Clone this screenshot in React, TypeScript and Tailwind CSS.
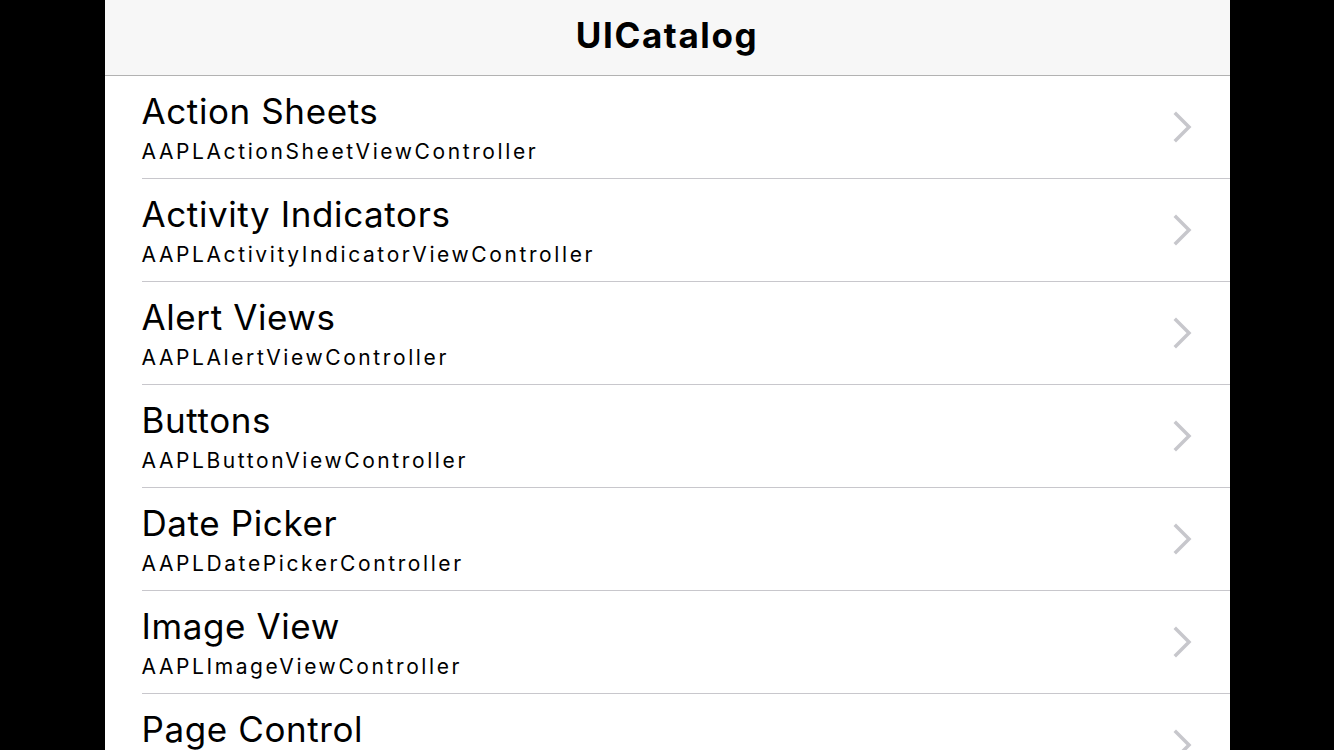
const items = [
  { title: 'Action Sheets', sub: 'AAPLActionSheetViewController' },
  { title: 'Activity Indicators', sub: 'AAPLActivityIndicatorViewController' },
  { title: 'Alert Views', sub: 'AAPLAlertViewController' },
  { title: 'Buttons', sub: 'AAPLButtonViewController' },
  { title: 'Date Picker', sub: 'AAPLDatePickerController' },
  { title: 'Image View', sub: 'AAPLImageViewController' },
  { title: 'Page Control', sub: 'AAPLPageControlViewController' },
];

function Chevron() {
  return (
    <svg width="20" height="32" viewBox="0 0 20 32" fill="none" className="shrink-0">
      <polyline
        points="3,3 16,16 3,29"
        stroke="#c7c7cc"
        strokeWidth="3.5"
        strokeLinecap="square"
        strokeLinejoin="miter"
      />
    </svg>
  );
}

export default function App() {
  return (
    <div className="h-[750px] w-[1334px] bg-black flex justify-center overflow-hidden">
      <div className="w-[1125px] bg-white flex flex-col font-['Inter',sans-serif] text-black">
        <header className="h-[76px] shrink-0 bg-[#f7f7f7] border-b border-[#b2b2b2] flex items-center justify-center">
          <h1 className="text-[35px] font-bold tracking-[1.6px] -mt-[4px]">UICatalog</h1>
        </header>
        <ul className="flex flex-col pl-[37px]">
          {items.map((item) => (
            <li key={item.title} className="h-[103px] shrink-0 border-b border-[#c8c7cc] flex items-center pr-[37px]">
              <div className="flex-1 self-start pt-[15px] flex flex-col">
                <span className="text-[35px] leading-[40px] tracking-[0.6px]">{item.title}</span>
                <span className="mt-[8px] text-[21px] leading-[26px] tracking-[2.6px]">{item.sub}</span>
              </div>
              <Chevron />
            </li>
          ))}
        </ul>
      </div>
    </div>
  );
}
